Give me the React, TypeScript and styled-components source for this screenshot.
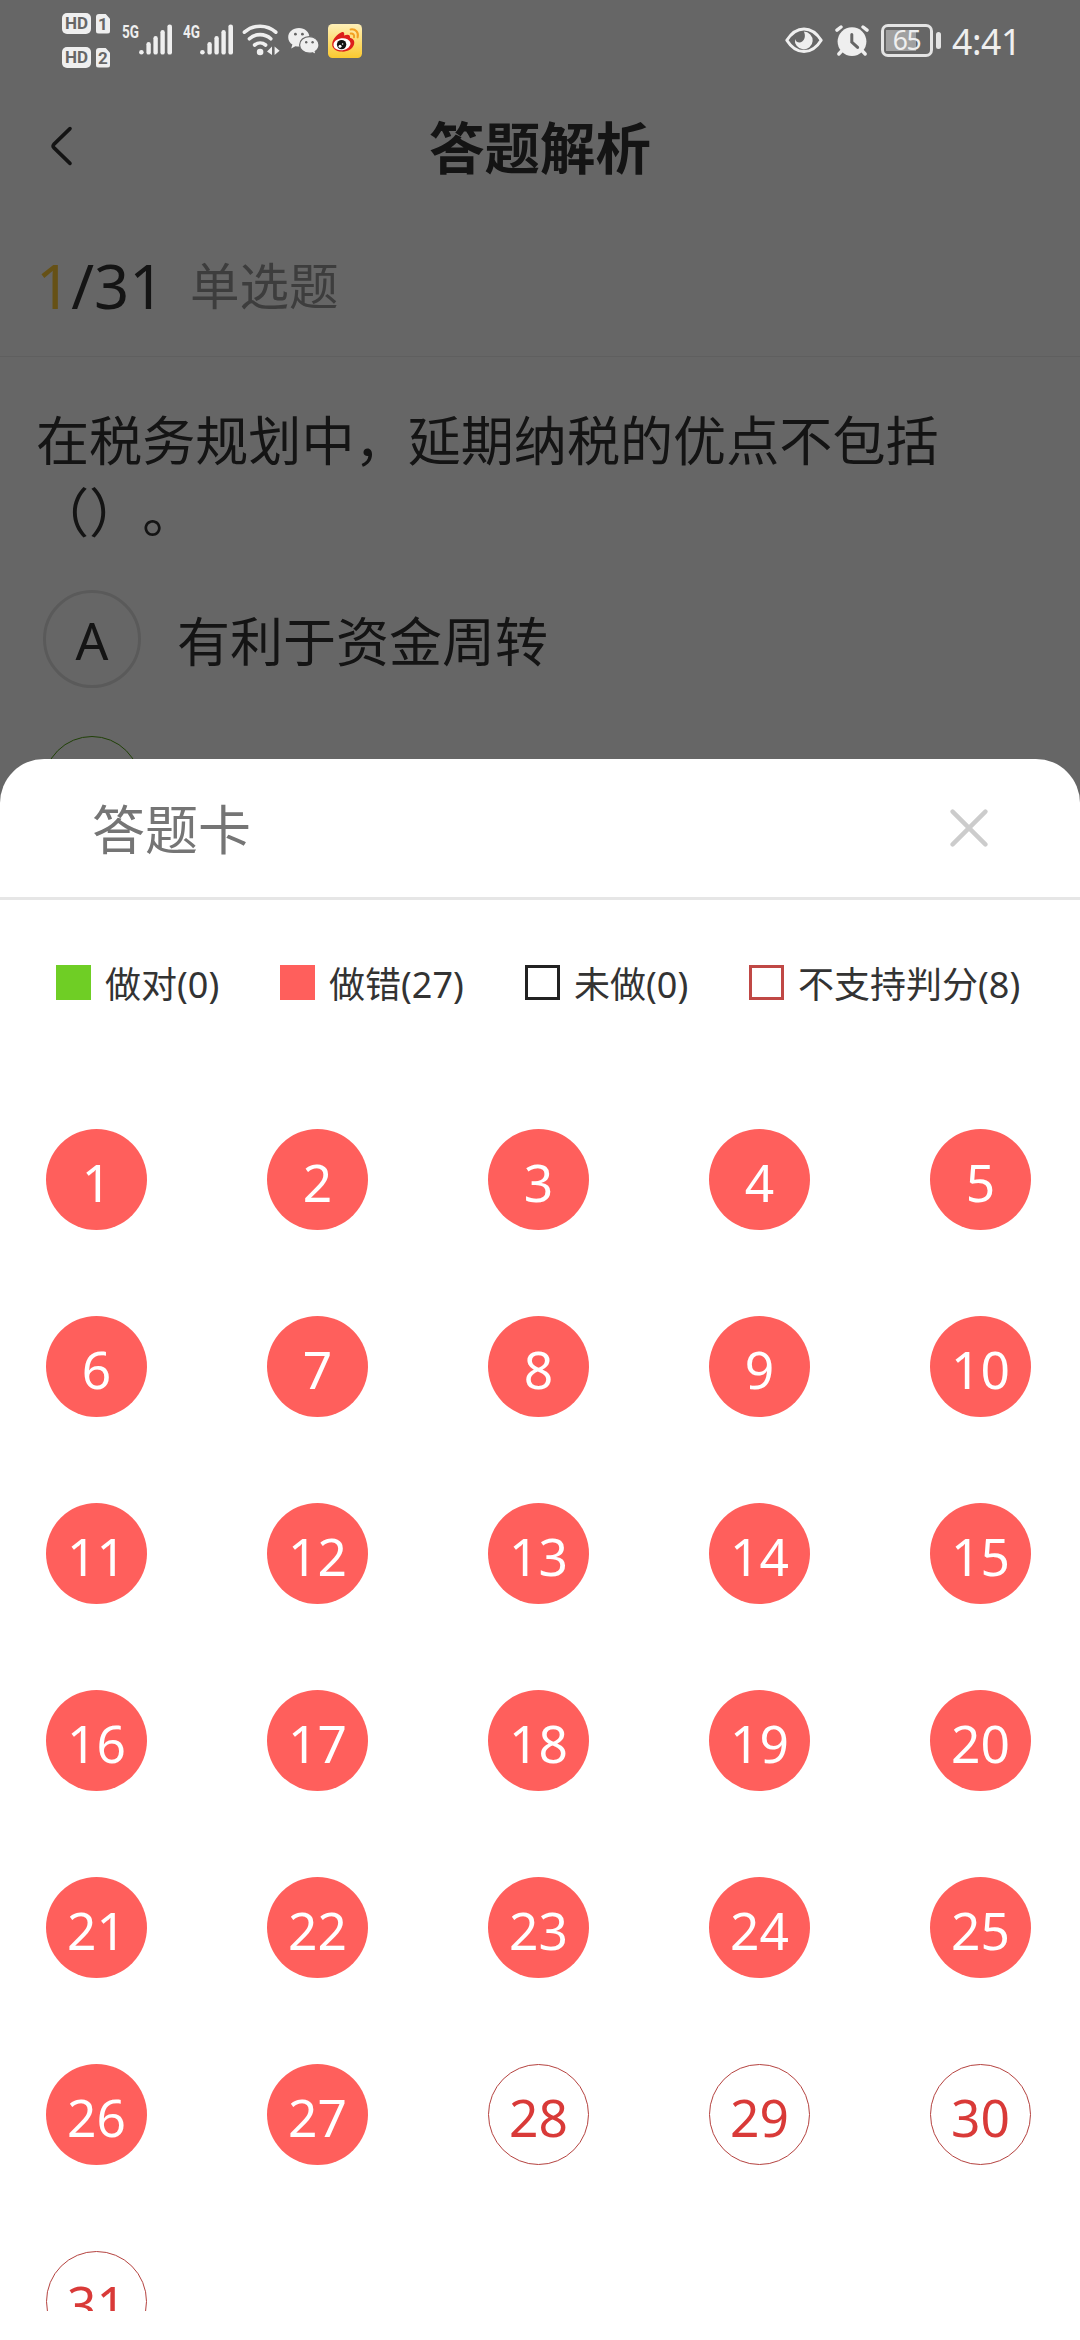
import React from 'react';
import styled, { createGlobalStyle, css } from 'styled-components';

const cjk = `'Noto Sans CJK SC', sans-serif`;
const latin = `'Noto Sans', 'Noto Sans CJK SC', sans-serif`;

const GlobalStyle = createGlobalStyle`
  html, body { margin: 0; padding: 0; background: #fff; }
  *, *::before, *::after { box-sizing: border-box; }
  button { appearance: none; border: 0; padding: 0; margin: 0; background: none; font: inherit; color: inherit; }
  svg { display: block; flex: none; }
`;

const Screen = styled.div`
  position: relative;
  width: 1080px;
  height: 2340px;
  overflow: hidden;
  background: #fff;
  color: #333;
  font-family: ${cjk};
`;

const Num = styled.span`
  font-family: ${latin};
  white-space: nowrap;
`;

/* ---------- status bar ---------- */

const StatusBar = styled.header`
  position: absolute;
  inset: 0 0 auto 0;
  z-index: 3;
  height: 80px;
  display: flex;
  justify-content: space-between;
  color: #efefef;
`;

const StatusLeft = styled.div`
  display: flex;
  align-items: flex-start;
  padding: 13px 0 0 62px;
`;

const StatusRight = styled.div`
  display: flex;
  align-items: flex-start;
  padding: 24px 66px 0 0;
`;

const SimList = styled.div`
  display: grid;
  row-gap: 13px;
  margin-right: 12px;
`;

const SimRow = styled.div`
  display: flex;
  align-items: center;
  gap: 5px;
  height: 21px;
`;

const Badge = styled.span<{ $w: number; $cut?: boolean }>`
  width: ${(p) => p.$w}px;
  height: ${(p) => (p.$cut ? 20 : 21)}px;
  border-radius: ${(p) => (p.$cut ? 3 : 5)}px;
  background: #efefef;
  color: #666;
  font: 700 17px/21px Roboto, sans-serif;
  text-align: center;
  ${(p) => p.$cut && css`clip-path: polygon(0 0, 66% 0, 100% 26%, 100% 100%, 0 100%);`}
`;

const Signal = styled.div<{ $gap: number }>`
  display: flex;
  align-items: flex-start;
  padding-top: 11px;
  width: ${(p) => p.$gap}px;
`;

const NetType = styled.span`
  width: 17px;
  font: 700 18px/16px Roboto, sans-serif;
  transform: scaleX(0.75);
  transform-origin: 0 0;
`;

const IconSlot = styled.div<{ $top?: number; $right?: number }>`
  padding-top: ${(p) => p.$top ?? 0}px;
  margin-right: ${(p) => p.$right ?? 0}px;
`;

const Battery = styled.div`
  display: flex;
  align-items: center;
  gap: 3px;
  margin-right: 11px;
`;

const BatteryCell = styled.div`
  width: 52px;
  height: 33px;
  border: 3px solid #e4e4e4;
  border-radius: 7px;
  display: flex;
  align-items: center;
  justify-content: center;
  padding: 0 2px 2px 1px;
  background: linear-gradient(90deg, #a0a0a0 0 30px, transparent 30px) 2px 3px / 42px 21px no-repeat;
  font-size: 26.5px;
  line-height: 26px;
  letter-spacing: -0.05em;
`;

const BatteryCap = styled.div`
  width: 5px;
  height: 17px;
  border-radius: 3px;
  background: #e4e4e4;
`;

const Clock = styled(Num)`
  width: 62px;
  font-size: 35.5px;
  line-height: 34px;
  letter-spacing: -0.01em;
`;

const SignalBars = () => (
  <svg width="34" height="31" viewBox="0 0 34 31" fill="#efefef">
    <circle cx="2.4" cy="28.2" r="2.3" />
    <rect x="7.4" y="18" width="4.4" height="12.6" rx="2.2" />
    <rect x="14.4" y="12" width="4.4" height="18.6" rx="2.2" />
    <rect x="21.4" y="6" width="4.4" height="24.6" rx="2.2" />
    <rect x="28.4" y="0.4" width="4.6" height="30.2" rx="2.2" />
  </svg>
);

const WifiIcon = () => (
  <svg width="38" height="32" viewBox="0 0 38 32" fill="none" stroke="#efefef" strokeWidth="3.6" strokeLinecap="round">
    <path d="M2.4 8.2 A23.5 23.5 0 0 1 33.8 8.2" />
    <path d="M7.4 14.8 A15.8 15.8 0 0 1 28.8 14.8" />
    <path d="M12.6 21 A8.6 8.6 0 0 1 23.6 21" />
    <circle cx="18.1" cy="28" r="3.3" fill="#efefef" stroke="none" />
    <path d="M30 22.6 V31 L25 27.4 Z M32.6 31 V22.6 L37.6 26.8 Z" fill="#efefef" stroke="none" />
  </svg>
);

const WeChatIcon = () => (
  <svg width="32" height="27" viewBox="0 0 32 27">
    <path d="M11 0 C4.8 0 0.2 4 0.2 9.2 C0.2 12.2 1.8 14.8 4.4 16.6 L3.2 20.4 L7.4 18.2 C8.6 18.5 9.8 18.6 11 18.6 C16.8 18.6 21.4 14.6 21.4 9.2 C21.4 4 16.8 0 11 0 Z" fill="#efefef" />
    <path d="M21.4 8.6 C15.8 8.6 11.6 12.4 11.6 17 C11.6 21.6 15.8 25.2 21.4 25.2 C22.6 25.2 23.6 25.1 24.6 24.8 L28 26.6 L27.2 23.4 C29.8 21.8 31 19.6 31 17 C31 12.4 26.8 8.6 21.4 8.6 Z" fill="#efefef" stroke="#666" strokeWidth="1.2" />
    <g fill="#666">
      <circle cx="7.4" cy="6.2" r="1.4" />
      <circle cx="14.4" cy="6.2" r="1.4" />
      <circle cx="18.2" cy="14.2" r="1.2" />
      <circle cx="24.6" cy="14.2" r="1.2" />
    </g>
  </svg>
);

const WeiboIcon = () => (
  <svg width="34" height="34" viewBox="0 0 34 34">
    <defs>
      <linearGradient id="weiboBg" x1="0" y1="0" x2="0" y2="1">
        <stop offset="0" stopColor="#fff0b8" />
        <stop offset="1" stopColor="#fbc92f" />
      </linearGradient>
    </defs>
    <rect width="34" height="34" rx="4.5" fill="url(#weiboBg)" />
    <path d="M13.6 8.2 C15.8 7.4 16.8 9 16 11.6 C19.6 10.2 22.6 10.6 22 13.8 C25.6 14.8 27 17.2 26 20.6 C24.6 25.4 19.2 28 13.6 27.6 C7.8 27.2 3.6 24 4.2 19.4 C4.8 14.8 9.6 9.6 13.6 8.2 Z" fill="#dd1f1c" />
    <ellipse cx="14" cy="20.2" rx="8.6" ry="6" fill="#fff" transform="rotate(-8 14 20.2)" />
    <circle cx="13.6" cy="20.6" r="4.7" fill="#111" />
    <circle cx="12" cy="22.2" r="1.5" fill="#fff" />
    <circle cx="14.6" cy="20" r="0.8" fill="#fff" />
    <g fill="none" stroke="#f3a022" strokeWidth="2" strokeLinecap="round">
      <path d="M22.6 5.4 C27.6 4.6 31 8.4 29.6 13.4" />
      <path d="M22.8 9.6 C25.2 9.4 26.6 11 26 13.2" />
    </g>
  </svg>
);

const EyeIcon = () => (
  <svg width="38" height="27" viewBox="0 0 38 27">
    <path d="M1.8 13.3 C6.6 5.6 12.4 1.9 19 1.9 C25.6 1.9 31.4 5.6 36.2 13.3 C31.4 21 25.6 24.6 19 24.6 C12.4 24.6 6.6 21 1.8 13.3 Z" fill="none" stroke="#efefef" strokeWidth="3" strokeLinejoin="round" />
    <path d="M18.8 4.6 A8.9 8.9 0 1 1 10 12 C11 15.4 14.6 16.6 17.2 14.6 C20.2 12.4 20.6 8 18.8 4.6 Z" fill="#efefef" />
  </svg>
);

const AlarmIcon = () => (
  <svg width="34" height="32" viewBox="0 0 34 32" fill="none" stroke="#efefef" strokeLinecap="round">
    <circle cx="17" cy="16.6" r="14.4" fill="#efefef" stroke="none" />
    <path d="M2 5.2 L6 2 M32 5.2 L28 2" strokeWidth="3.4" />
    <path d="M6.6 26 L3.8 29 M27.4 26 L30.2 29" strokeWidth="3.4" />
    <path d="M16.8 9.4 V17 L22.6 22.4" stroke="#666" strokeWidth="3" />
  </svg>
);

/* ---------- quiz page ---------- */

const NavBar = styled.nav`
  display: grid;
  grid-template-columns: 120px 1fr 120px;
  align-items: center;
  height: 140px;
  margin-top: 80px;
`;

const BackButton = styled.button`
  padding: 0 0 8px 50px;
`;

const PageTitle = styled.h1`
  margin: 0;
  padding-bottom: 11px;
  font-size: 55.5px;
  line-height: 80px;
  font-weight: 700;
  text-align: center;
`;

const ProgressRow = styled.div`
  display: flex;
  align-items: center;
  height: 137px;
  padding: 0 36px;
  border-bottom: 1px solid #eee;
`;

const Progress = styled(Num)`
  width: 154px;
  padding-bottom: 6px;
  font-size: 61.5px;
  line-height: 80px;
`;

const Current = styled.span`
  color: #ffcb38;
`;

const QuestionType = styled.span`
  padding-bottom: 8px;
  color: #999;
  font-size: 49.5px;
  line-height: 80px;
`;

const Question = styled.p`
  margin: 0;
  padding: 45px 36px 2px;
  font-size: 53.1px;
  line-height: 72px;
  text-spacing-trim: space-all;
`;

const Options = styled.div`
  display: grid;
  row-gap: 48px;
  padding: 42px 43px 0;
`;

const Option = styled.div`
  display: flex;
  align-items: center;
  gap: 36px;
  font-size: 53px;
  line-height: 80px;
`;

const OptionMark = styled.div<{ $right?: boolean }>`
  width: 98px;
  height: 98px;
  padding-top: 2px;
  border-radius: 50%;
  border: ${(p) => (p.$right ? '1px solid #4fa010' : '3px solid #e1e1e1')};
  display: flex;
  align-items: center;
  justify-content: center;
  font-family: ${latin};
  font-size: 51.5px;
`;

const Mask = styled.div`
  position: absolute;
  inset: 0;
  z-index: 1;
  background: rgba(0, 0, 0, 0.6);
`;

/* ---------- answer sheet ---------- */

const Sheet = styled.section`
  position: absolute;
  inset: 759px 0 0 0;
  z-index: 2;
  display: flex;
  flex-direction: column;
  background: #fff;
  border-radius: 44px 44px 0 0;
  overflow: hidden;
`;

const SheetHeader = styled.div`
  display: flex;
  align-items: center;
  justify-content: space-between;
  height: 141px;
  padding: 0 92px;
  border-bottom: 3px solid #e6e6e6;
`;

const SheetTitle = styled.h2`
  margin: 0;
  padding-bottom: 2px;
  color: #757575;
  font-size: 53px;
  line-height: 80px;
  font-weight: 400;
`;

const Legend = styled.div`
  display: grid;
  grid-template-columns: 224px 245px 224px auto;
  padding: 62px 0 0 56px;
`;

const LegendItem = styled.div`
  display: flex;
  align-items: center;
  gap: 14px;
  height: 41px;
  font-size: 36px;
  line-height: 41px;
  white-space: nowrap;
`;

const LegendLabel = styled.span`
  padding-top: 2px;
`;

const Swatch = styled.i<{ $fill?: string; $line?: string }>`
  width: 35px;
  height: 35px;
  background: ${(p) => p.$fill ?? 'transparent'};
  border: ${(p) => (p.$line ? `3px solid ${p.$line}` : '0')};
`;

const Scroller = styled.div`
  height: 1182px;
  margin-top: 126px;
  overflow: hidden;
`;

const Grid = styled.div`
  display: grid;
  grid-template-columns: repeat(5, 101px);
  column-gap: 120px;
  row-gap: 86px;
  padding-left: 46px;
`;

const Cell = styled.button<{ $open: boolean }>`
  display: flex;
  align-items: center;
  justify-content: center;
  width: 101px;
  height: 101px;
  padding: 4px 0 0;
  border-radius: 50%;
  background: ${(p) => (p.$open ? '#fff' : '#ff5f5c')};
  border: ${(p) => (p.$open ? '1px solid #b54340' : '0')};
  color: ${(p) => (p.$open ? '#d93a38' : '#fff')};
  font-size: 51.5px;
  line-height: 60px;
`;

const legend = [
  { label: '做对', count: 0, fill: '#6fce25' },
  { label: '做错', count: 27, fill: '#ff5f5c' },
  { label: '未做', count: 0, line: '#222' },
  { label: '不支持判分', count: 8, line: '#c04845' },
];

const answers = Array.from({ length: 31 }, (_, i) => i + 1);

export default function App() {
  return (
    <Screen>
      <GlobalStyle />
      <StatusBar>
        <StatusLeft>
          <SimList>
            {[1, 2].map((n) => (
              <SimRow key={n}>
                <Badge $w={29}>HD</Badge>
                <Badge $w={14} $cut>{n}</Badge>
              </SimRow>
            ))}
          </SimList>
          <Signal $gap={61}><NetType>5G</NetType><SignalBars /></Signal>
          <Signal $gap={59}><NetType>4G</NetType><SignalBars /></Signal>
          <IconSlot $top={11} $right={8}><WifiIcon /></IconSlot>
          <IconSlot $top={15} $right={8}><WeChatIcon /></IconSlot>
          <IconSlot $top={11}><WeiboIcon /></IconSlot>
        </StatusLeft>
        <StatusRight>
          <IconSlot $top={3} $right={12}><EyeIcon /></IconSlot>
          <IconSlot $top={1} $right={12}><AlarmIcon /></IconSlot>
          <Battery>
            <BatteryCell><Num>65</Num></BatteryCell>
            <BatteryCap />
          </Battery>
          <Clock>4:41</Clock>
        </StatusRight>
      </StatusBar>

      <NavBar>
        <BackButton aria-label="返回">
          <svg width="24" height="40" viewBox="0 0 24 40" fill="none" stroke="#333" strokeWidth="3.6" strokeLinecap="round" strokeLinejoin="round">
            <path d="M20 2.6 L3.8 18.4 Q2.4 20 3.8 21.6 L20 37.4" />
          </svg>
        </BackButton>
        <PageTitle>答题解析</PageTitle>
      </NavBar>
      <ProgressRow>
        <Progress><Current>1</Current>/31</Progress>
        <QuestionType>单选题</QuestionType>
      </ProgressRow>
      <Question>在税务规划中，延期纳税的优点不包括<br />（）。</Question>
      <Options>
        <Option>
          <OptionMark>A</OptionMark>
          <span>有利于资金周转</span>
        </Option>
        <Option>
          <OptionMark $right />
        </Option>
      </Options>

      <Mask />

      <Sheet>
        <SheetHeader>
          <SheetTitle>答题卡</SheetTitle>
          <button aria-label="关闭">
            <svg width="38" height="38" viewBox="0 0 38 38" stroke="#ccc" strokeWidth="4.4" strokeLinecap="round">
              <path d="M2.6 2.6 L35.4 35.4 M35.4 2.6 L2.6 35.4" />
            </svg>
          </button>
        </SheetHeader>
        <Legend>
          {legend.map((l) => (
            <LegendItem key={l.label}>
              <Swatch $fill={l.fill} $line={l.line} />
              <LegendLabel>{l.label}<Num>({l.count})</Num></LegendLabel>
            </LegendItem>
          ))}
        </Legend>
        <Scroller>
          <Grid>
            {answers.map((n) => (
              <Cell key={n} $open={n > 27}><Num>{n}</Num></Cell>
            ))}
          </Grid>
        </Scroller>
      </Sheet>
    </Screen>
  );
}
